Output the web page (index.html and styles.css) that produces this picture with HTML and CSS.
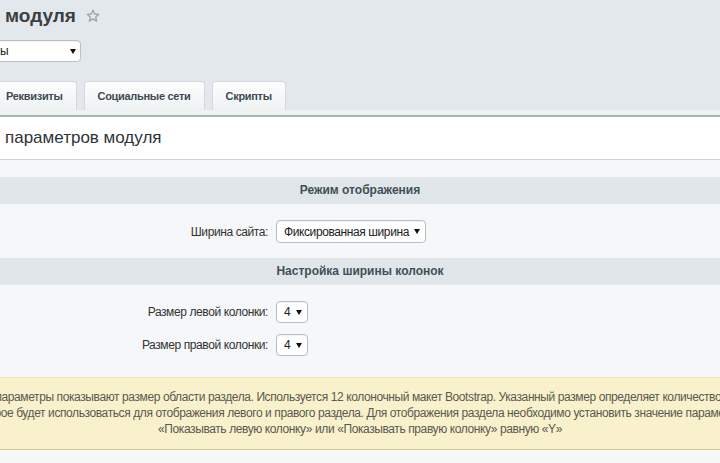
FILE: index.html
```html
<!DOCTYPE html>
<html lang="ru">
<head>
<meta charset="utf-8">
<title>Настройки модуля</title>
<link rel="stylesheet" href="styles.css">
</head>
<body>
<div class="page">
  <header class="top">
    <h1 class="title">модуля
      <svg class="star" width="14" height="14" viewBox="0 0 14 14" aria-hidden="true"><path d="M7 1.2 L8.7 5 L12.8 5.3 L9.7 8 L10.6 12.1 L7 9.9 L3.4 12.1 L4.3 8 L1.2 5.3 L5.3 5 Z" fill="none" stroke="#9aa4aa" stroke-width="1.3" stroke-linejoin="round"/></svg>
    </h1>
    <div class="site-select"><span>ы</span><span class="arrow"></span></div>
  </header>

  <nav class="tabs">
    <div class="tab">Реквизиты</div>
    <div class="tab">Социальные сети</div>
    <div class="tab">Скрипты</div>
  </nav>
  <div class="tabline"></div>

  <section class="tab-body">
    <div class="panel-title">параметров модуля</div>
    <div class="form">
      <div class="sect">Режим отображения</div>
      <div class="row row-single">
        <label class="lbl">Ширина сайта:</label>
        <div class="sel sel-wide"><span>Фиксированная ширина</span><span class="arrow"></span></div>
      </div>
      <div class="sect">Настройка ширины колонок</div>
      <div class="rows">
        <div class="row">
          <label class="lbl">Размер левой колонки:</label>
          <div class="sel sel-small"><span>4</span><span class="arrow"></span></div>
        </div>
        <div class="row">
          <label class="lbl">Размер правой колонки:</label>
          <div class="sel sel-small"><span>4</span><span class="arrow"></span></div>
        </div>
      </div>
      <div class="notice">
        <span class="line">Данные параметры показывают размер области раздела. Используется 12 колоночный макет Bootstrap. Указанный размер определяет количество колонок,</span>
        <span class="line">которое будет использоваться для отображения левого и правого раздела. Для отображения раздела необходимо установить значение параметров</span>
        <span class="line">«Показывать левую колонку» или «Показывать правую колонку» равную «Y»</span>
      </div>
    </div>
  </section>
</div>
</body>
</html>
```

FILE: styles.css
```css
html, body {
  margin: 0;
  padding: 0;
  overflow: hidden;
}

body {
  width: 720px;
  height: 463px;
  background: #e2e8eb;
  font-family: "Liberation Sans", Arial, sans-serif;
  color: #333;
}

.page {
  width: 720px;
  height: 463px;
  overflow: hidden;
}

.top {
  padding: 3px 0 0 5px;
}

.title {
  margin: 0;
  display: flex;
  align-items: center;
  gap: 10px;
  font-size: 19px;
  line-height: 26px;
  font-weight: bold;
  color: #3a3f44;
}

.star {
  display: block;
  margin-top: -1px;
}

.site-select {
  margin-top: 11px;
  margin-left: -15px;
  width: 91px;
  height: 22px;
  box-sizing: border-box;
  border: 1px solid #b9c2c6;
  border-radius: 4px;
  background: #fff;
  display: flex;
  align-items: center;
  justify-content: space-between;
  padding: 0 4px 0 9px;
  font-size: 12px;
  color: #222;
  box-shadow: inset 0 1px 1px rgba(0, 0, 0, 0.06);
}

.arrow {
  width: 0;
  height: 0;
  border-left: 3px solid transparent;
  border-right: 3px solid transparent;
  border-top: 5px solid #111;
}

.tabs {
  display: flex;
  gap: 7px;
  margin-top: 19px;
  margin-left: -8px;
  height: 29px;
}

.tab {
  height: 29px;
  box-sizing: border-box;
  padding: 0 13px;
  border: 1px solid #d3d9dc;
  border-bottom: 0;
  border-radius: 4px 4px 0 0;
  background: linear-gradient(#fdfdfd, #eff2f3);
  font-size: 11px;
  letter-spacing: -0.3px;
  font-weight: bold;
  line-height: 28px;
  color: #3d4a52;
  white-space: nowrap;
}

.tabline {
  height: 5px;
  background: #eef2f3;
  border-bottom: 2px solid #a9b3b8;
}

.panel-title {
  background: #fff;
  height: 42px;
  line-height: 42px;
  padding-left: 5px;
  font-size: 17px;
  color: #2f3336;
  border-bottom: 1px solid #cbd3d7;
}

.form {
  margin-left: -80px;
  width: 880px;
  background: #f5f7f8;
  padding: 17px 0 30px;
}

.sect {
  height: 27px;
  line-height: 27px;
  background: #e0e6e9;
  text-align: center;
  font-weight: bold;
  font-size: 12px;
  color: #404f57;
}

.row {
  display: grid;
  grid-template-columns: 40% 60%;
  align-items: center;
}

.row-single {
  padding: 16px 0 15px;
}

.rows {
  display: flex;
  flex-direction: column;
  gap: 11px;
  padding: 16px 0 21px;
}

.lbl {
  text-align: right;
  padding-right: 4px;
  font-size: 12px;
  letter-spacing: -0.4px;
  color: #333;
  white-space: nowrap;
}

.sel {
  justify-self: start;
  margin-left: 4px;
  box-sizing: border-box;
  border: 1px solid #b5bec3;
  border-radius: 4px;
  background: #fff;
  display: flex;
  align-items: center;
  justify-content: space-between;
  font-size: 12px;
  letter-spacing: -0.4px;
  color: #222;
  white-space: nowrap;
  box-shadow: inset 0 1px 1px rgba(0, 0, 0, 0.06);
}

.sel-wide {
  width: 150px;
  height: 23px;
  padding: 0 5px 0 7px;
}

.sel-small {
  width: 32px;
  height: 22px;
  padding: 0 5px 0 7px;
}

.notice {
  background: #f8f1cb;
  border-top: 1px solid #ece4bd;
  border-bottom: 1px solid #d6c990;
  padding: 11px 0 12px;
  display: flex;
  flex-direction: column;
  align-items: center;
  font-size: 12px;
  letter-spacing: -0.4px;
  line-height: 16px;
  color: #5a5950;
}

.line {
  white-space: nowrap;
}
```
